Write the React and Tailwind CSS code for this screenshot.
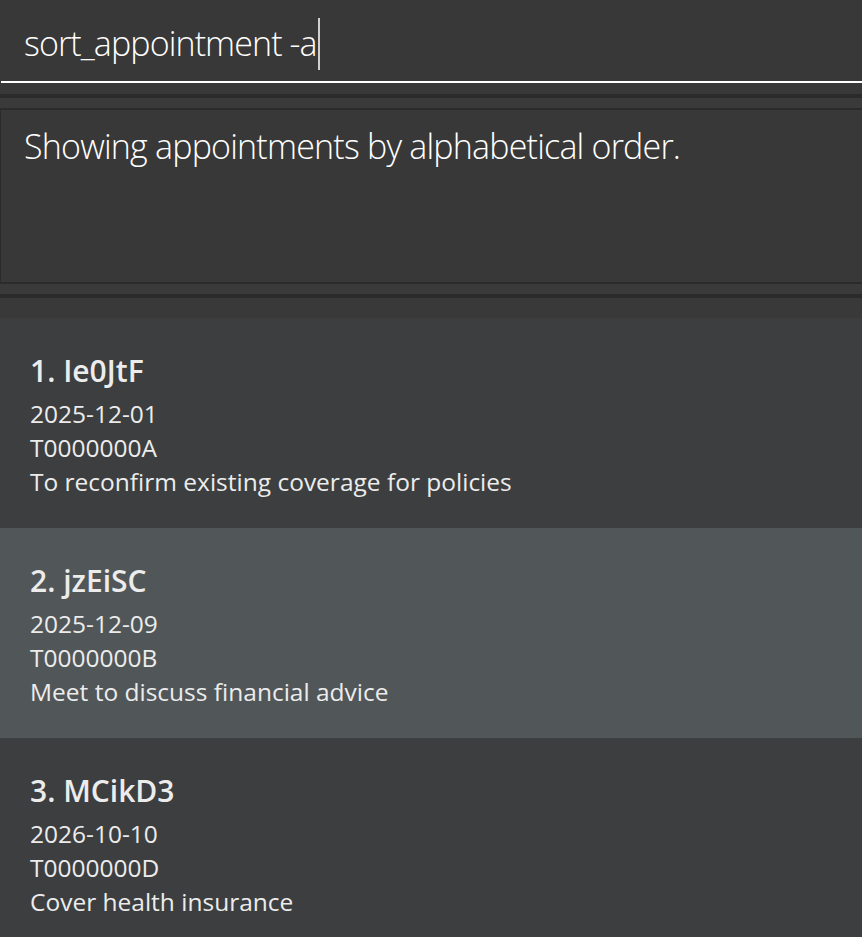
import React from "react";

const cards = [
  { n: 1, id: "Ie0JtF", date: "2025-12-01", nric: "T0000000A", desc: "To reconfirm existing coverage for policies", bg: "bg-[#3c3e3f]" },
  { n: 2, id: "jzEiSC", date: "2025-12-09", nric: "T0000000B", desc: "Meet to discuss financial advice", bg: "bg-[#515658]" },
  { n: 3, id: "MCikD3", date: "2026-10-10", nric: "T0000000D", desc: "Cover health insurance", bg: "bg-[#3c3e3f]" },
];

function Card({ c }) {
  return (
    <div className={`${c.bg} h-[210px] shrink-0 pl-[30px] pt-[33px] text-[#ececec]`} style={{ fontFamily: '"Open Sans", sans-serif' }}>
      <div className="text-[30px] leading-[40px] font-semibold">{c.n}. {c.id}</div>
      <div className="mt-[6px] flex flex-col text-[24.5px] leading-[34px]">
        <div>{c.date}</div>
        <div>{c.nric}</div>
        <div>{c.desc}</div>
      </div>
    </div>
  );
}

export default function App() {
  return (
    <div className="h-[937px] w-[862px] overflow-hidden bg-[#383838] flex flex-col">
      {/* command box */}
      <div className="h-[81px] shrink-0 flex items-start pl-[24px]" style={{ fontFamily: '"Open Sans", sans-serif' }}>
        <span className="mt-[18px] text-[34px] leading-[50px] font-light text-white tracking-[-0.9px]">sort_appointment -a</span>
        <span className="mt-[18px] ml-[1px] w-[2px] h-[52px] bg-[#d0d0d0]"></span>
      </div>
      <div className="h-[2px] shrink-0 ml-[1px] bg-white"></div>
      <div className="h-[11px] shrink-0"></div>
      <div className="h-[4px] shrink-0 bg-[#2b2b2b]"></div>
      <div className="h-[10px] shrink-0 bg-[#3a3a3a]"></div>
      {/* result display */}
      <div className="h-[176px] shrink-0 border-y-2 border-l border-[#2b2b2b] bg-[#383838] pl-[23px] pt-[12px]" style={{ fontFamily: '"Open Sans", sans-serif' }}>
        <div className="text-[34px] leading-[48px] font-light text-white tracking-[-0.8px]">Showing appointments by alphabetical order.</div>
      </div>
      <div className="h-[10px] shrink-0 bg-[#3a3a3a]"></div>
      <div className="h-[4px] shrink-0 bg-[#2b2b2b]"></div>
      <div className="h-[20px] shrink-0 bg-[#393939]"></div>
      {/* list */}
      <div className="flex-1 flex flex-col bg-[#3d3e40]">
        {cards.map((c) => (
          <Card key={c.n} c={c} />
        ))}
      </div>
    </div>
  );
}
